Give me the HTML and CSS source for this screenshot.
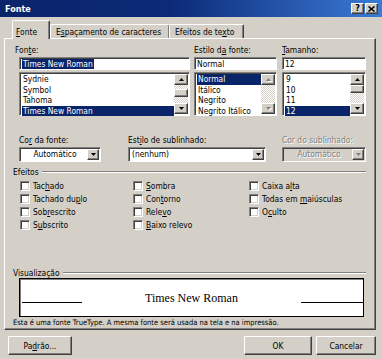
FILE: index.html
```html
<!DOCTYPE html>
<html lang="pt-BR">
<head>
<meta charset="utf-8">
<title>Fonte</title>
<link rel="stylesheet" href="styles.css">
</head>
<body>
<div class="win">
  <div class="titlebar">
    <span class="title">Fonte</span>
    <div class="tbtns">
      <span class="tbtn q">?</span>
      <span class="tbtn"><svg width="7" height="6" viewBox="0 0 7 6"><path d="M0.5 0.5L6.5 5.5M6.5 0.5L0.5 5.5" stroke="#000" stroke-width="1.6"/></svg></span>
    </div>
  </div>
  <div class="content">
    <div class="tabs">
      <div class="tab sel"><span><u>F</u>onte</span></div>
      <div class="tab t2"><span>E<u>s</u>paçamento de caracteres</span></div>
      <div class="tab t3"><span>Efeitos de te<u>x</u>to</span></div>
    </div>
    <div class="panel">
      <div class="row1">
        <div class="col">
          <div class="lbl lbl-font">Fon<u>t</u>e:</div>
          <div class="field"><span class="hl">Times New Roman</span></div>
          <div class="list">
            <div class="items">
              <div class="item">Sydnie</div>
              <div class="item">Symbol</div>
              <div class="item">Tahoma</div>
              <div class="item sel">Times New Roman</div>
            </div>
            <div class="sb">
              <div class="sbbtn"><svg width="5" height="3" viewBox="0 0 5 3"><path d="M0 3h5L2.5 0z"/></svg></div>
              <div class="track"><div class="thumb thumb-font"></div></div>
              <div class="sbbtn"><svg width="5" height="3" viewBox="0 0 5 3"><path d="M0 0h5L2.5 3z"/></svg></div>
            </div>
          </div>
        </div>
        <div class="col">
          <div class="lbl">Estilo d<u>a</u> fonte:</div>
          <div class="field">Normal</div>
          <div class="list">
            <div class="items">
              <div class="item sel">Normal</div>
              <div class="item">Itálico</div>
              <div class="item">Negrito</div>
              <div class="item">Negrito Itálico</div>
            </div>
            <div class="sb off">
              <div class="sbbtn"><svg width="5" height="3" viewBox="0 0 5 3"><path d="M0 3h5L2.5 0z"/></svg></div>
              <div class="track"></div>
              <div class="sbbtn"><svg width="5" height="3" viewBox="0 0 5 3"><path d="M0 0h5L2.5 3z"/></svg></div>
            </div>
          </div>
        </div>
        <div class="col col3">
          <div class="lbl"><u>T</u>amanho:</div>
          <div class="field">12</div>
          <div class="list">
            <div class="items">
              <div class="item">9</div>
              <div class="item">10</div>
              <div class="item">11</div>
              <div class="item sel">12</div>
            </div>
            <div class="sb">
              <div class="sbbtn"><svg width="5" height="3" viewBox="0 0 5 3"><path d="M0 3h5L2.5 0z"/></svg></div>
              <div class="track"><div class="thumb thumb-size"></div></div>
              <div class="sbbtn"><svg width="5" height="3" viewBox="0 0 5 3"><path d="M0 0h5L2.5 3z"/></svg></div>
            </div>
          </div>
        </div>
      </div>

      <div class="row2">
        <div class="c1">
          <div class="lbl">Co<u>r</u> da fonte:</div>
          <div class="combo"><span class="ctext center">Automático</span><span class="dd"><svg width="5" height="3" viewBox="0 0 5 3"><path d="M0 0h5L2.5 3z"/></svg></span></div>
        </div>
        <div class="c2">
          <div class="lbl">Est<u>i</u>lo de sublinhado:</div>
          <div class="combo"><span class="ctext">(nenhum)</span><span class="dd"><svg width="5" height="3" viewBox="0 0 5 3"><path d="M0 0h5L2.5 3z"/></svg></span></div>
        </div>
        <div class="c3">
          <div class="lbl dis">Cor do sublinhado:</div>
          <div class="combo off"><span class="ctext center">Automático</span><span class="dd"><svg width="5" height="3" viewBox="0 0 5 3"><path d="M0 0h5L2.5 3z"/></svg></span></div>
        </div>
      </div>

      <div class="ghead g1"><span>Efeitos</span><span class="gline"></span></div>
      <div class="checks">
        <label class="chk"><span class="box"></span><span>Tac<u>h</u>ado</span></label>
        <label class="chk"><span class="box"></span><span><u>S</u>ombra</span></label>
        <label class="chk"><span class="box"></span><span>Caixa a<u>l</u>ta</span></label>
        <label class="chk"><span class="box"></span><span>Tachado du<u>p</u>lo</span></label>
        <label class="chk"><span class="box"></span><span>Con<u>t</u>orno</span></label>
        <label class="chk"><span class="box"></span><span>Todas em <u>m</u>aiúsculas</span></label>
        <label class="chk"><span class="box"></span><span>Sob<u>r</u>escrito</span></label>
        <label class="chk"><span class="box"></span><span>Rele<u>v</u>o</span></label>
        <label class="chk"><span class="box"></span><span>O<u>c</u>ulto</span></label>
        <label class="chk"><span class="box"></span><span>S<u>u</u>bscrito</span></label>
        <label class="chk"><span class="box"></span><span><u>B</u>aixo relevo</span></label>
      </div>

      <div class="ghead g2"><span>Visualização</span><span class="gline"></span></div>
      <div class="preview">
        <span class="pline pl"></span>
        <span class="ptext">Times New Roman</span>
        <span class="pline pr"></span>
      </div>
      <div class="note">Esta é uma fonte TrueType. A mesma fonte será usada na tela e na impressão.</div>
    </div>
    <div class="buttons">
      <button class="btn b-def">Pa<u>d</u>rão...</button>
      <span class="spacer"></span>
      <button class="btn b-ok">OK</button>
      <button class="btn b-cancel">Cancelar</button>
    </div>
  </div>
</div>
</body>
</html>
```

FILE: styles.css
```css
* { box-sizing: border-box; }
html, body { margin: 0; padding: 0; }
body {
  width: 382px;
  height: 359px;
  overflow: hidden;
  background: #d4d0c8;
  font-family: "DejaVu Sans Condensed", "DejaVu Sans", sans-serif;
  font-stretch: condensed;
  font-size: 8.4px;
  color: #000;
}
u { text-decoration: underline; text-underline-offset: 1px; }

.win {
  width: 382px;
  height: 359px;
  background: #d4d0c8;
  display: flex;
  flex-direction: column;
}

/* title bar */
.titlebar {
  height: 17px;
  flex: none;
  background: linear-gradient(to right, #0a246a 0%, #0c2a78 45%, #3a7bd5 100%);
  display: flex;
  align-items: center;
  justify-content: space-between;
  padding: 0 4px 0 5px;
}
.title { color: #fff; font-weight: bold; font-size: 9px; }
.tbtns { display: flex; gap: 1px; }
.tbtn {
  width: 13px;
  height: 11px;
  background: #d4d0c8;
  border: 1px solid;
  border-color: #fff #404040 #404040 #fff;
  box-shadow: inset -1px -1px #808080;
  display: flex;
  align-items: center;
  justify-content: center;
}
.tbtn.q { font-weight: bold; font-size: 9px; line-height: 1; font-family: "DejaVu Sans", sans-serif; }

/* content */
.content {
  flex: 1;
  display: flex;
  flex-direction: column;
  padding: 3px 6px 0 4px;
}

.tabs {
  display: flex;
  align-items: flex-end;
  height: 19px;
  margin-left: 8px;
  margin-bottom: -1px;
  position: relative;
  z-index: 1;
}
.tab {
  height: 14px;
  margin-bottom: 1px;
  border: 1px solid;
  border-bottom: none;
  border-color: #fff #404040 transparent #fff;
  box-shadow: inset -1px 0 #808080;
  border-radius: 2px 2px 0 0;
  display: flex;
  align-items: center;
  padding: 1px 0 0 5px;
  white-space: nowrap;
}
.tab.sel {
  height: 19px;
  margin-bottom: 0;
  width: 38px;
  padding: 3px 0 0 3px;
  background: #d4d0c8;
}
.tab.t2 { width: 120px; }
.tab.t3 { width: 75px; margin-left: -1px; }

.panel {
  height: 292px;
  border: 1px solid;
  border-color: #fff #404040 #404040 #fff;
  box-shadow: inset -1px -1px #808080;
  padding: 6px 9px 0 8px;
  display: flex;
  flex-direction: column;
}

.lbl { height: 10px; line-height: 10px; white-space: nowrap; }
.lbl-font { margin-left: -4px; }
.lbl.dis, .combo.off .ctext { color: #808080; text-shadow: 1px 1px 0 #fff; }

.row1 {
  display: grid;
  grid-template-columns: 171px 83px 85px;
  column-gap: 4px;
  margin-left: 6px;
}
.col { display: flex; flex-direction: column; }
.col3 { margin-left: 1px; }

.field {
  margin-top: 2px;
  height: 13px;
  background: #fff;
  border: 1px solid;
  border-color: #808080 #fff #fff #808080;
  box-shadow: inset 1px 1px #404040;
  padding: 1px 0 0 2px;
  line-height: 10px;
  white-space: nowrap;
  overflow: hidden;
}
.hl { background: #0a246a; color: #fff; display: inline-block; height: 10px; padding: 0 1px; }

.list {
  margin-top: 2px;
  height: 44px;
  background: #fff;
  border: 1px solid;
  border-color: #808080 #fff #fff #808080;
  box-shadow: inset 1px 1px #404040;
  padding: 1px;
  display: flex;
}
.items { flex: 1; display: flex; flex-direction: column; padding-left: 1px; }
.item { height: 10.5px; line-height: 10.5px; padding-left: 1px; white-space: nowrap; }
.item.sel { background: #0a246a; color: #fff; }

.sb { width: 14px; display: flex; flex-direction: column; }
.sbbtn, .thumb, .dd, .btn {
  background: #d4d0c8;
  border: 1px solid;
  border-color: #fff #404040 #404040 #fff;
  box-shadow: inset -1px -1px #808080;
}
.sbbtn { height: 11px; flex: none; display: flex; align-items: center; justify-content: center; }
.sbbtn svg path { fill: #000; }
.sb.off .sbbtn svg { filter: drop-shadow(1px 1px 0 #fff); }
.sb.off .sbbtn svg path { fill: #808080; }
.track {
  flex: 1;
  background: repeating-conic-gradient(#fff 0 25%, #d4d0c8 0 50%) 0 0 / 2px 2px;
}
.thumb { height: 8px; }
.thumb-font { margin-top: 4px; }
.thumb-size { margin-top: 0; }

.row2 {
  display: flex;
  margin-top: 19px;
  margin-left: 6px;
}
.c1 { width: 82px; }
.c2 { width: 138px; margin-left: 27px; }
.c3 { width: 84px; margin-left: 16px; }
.combo {
  margin-top: 2px;
  height: 15px;
  background: #fff;
  border: 1px solid;
  border-color: #808080 #fff #fff #808080;
  box-shadow: inset 1px 1px #404040;
  padding: 1px;
  display: flex;
}
.combo.off { background: #d4d0c8; }
.ctext { flex: 1; padding-left: 2px; line-height: 11px; white-space: nowrap; }
.ctext.center { text-align: center; }
.dd { width: 12px; flex: none; display: flex; align-items: center; justify-content: center; }
.dd svg path { fill: #000; }
.combo.off .dd svg path { fill: #808080; }

.ghead {
  height: 10px;
  line-height: 10px;
  display: flex;
  align-items: center;
}
.g1 { margin-top: 5px; }
.g2 { margin-top: 37px; }
.gline {
  flex: 1;
  height: 2px;
  margin-left: 3px;
  border-top: 1px solid #808080;
  border-bottom: 1px solid #fff;
}

.checks {
  margin-top: 2px;
  margin-left: 7px;
  display: grid;
  grid-template-columns: 113px 116px 1fr;
  grid-auto-rows: 13px;
}
.chk { display: flex; align-items: center; gap: 3px; white-space: nowrap; }
.box {
  width: 10px;
  height: 10px;
  flex: none;
  background: #fff;
  border: 1px solid;
  border-color: #808080 #fff #fff #808080;
  box-shadow: inset 1px 1px #404040, inset -1px -1px #d4d0c8;
}

.preview {
  height: 39px;
  margin: 0 2px 0 6px;
  background: #fff;
  border: 1px solid #000;
  box-shadow: inset 1px 1px #808080;
  display: flex;
  align-items: center;
  padding-left: 2px;
}
.pline { height: 1px; background: #000; margin-top: 9px; flex: none; }
.pl { width: 60px; }
.pr { width: 62px; }
.ptext {
  flex: 1;
  text-align: center;
  font-family: "Liberation Serif", serif;
  font-stretch: normal;
  font-size: 12px;
  line-height: 14px;
}

.note { margin-top: 1px; height: 10px; line-height: 10px; white-space: nowrap; font-size: 7.5px; }

.buttons {
  display: flex;
  margin-top: 6px;
  height: 19px;
  padding-left: 4px;
}
.spacer { flex: 1; }
.btn {
  font: inherit;
  font-stretch: condensed;
  color: #000;
  height: 19px;
  padding: 0;
  text-align: center;
}
.b-def { width: 64px; }
.b-ok { width: 68px; margin-right: 4px; }
.b-cancel { width: 60px; }
```
